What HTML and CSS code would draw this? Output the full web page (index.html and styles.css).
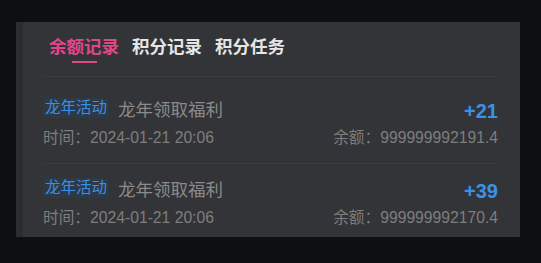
FILE: index.html
```html
<html>
<head>
<meta charset="UTF-8">
<title>余额记录</title>
<link rel="stylesheet" href="styles.css">
</head>
<body>
<div class="panel">
  <div class="tabs">
    <span class="tab active">余额记录</span>
    <span class="tab">积分记录</span>
    <span class="tab">积分任务</span>
  </div>
  <div class="list">
    <div class="row">
      <div class="left">
        <div class="line"><span class="badge">龙年活动</span><span class="title">龙年领取福利</span></div>
        <div class="meta">时间：2024-01-21 20:06</div>
      </div>
      <div class="right">
        <div class="amount">+21</div>
        <div class="meta">余额：999999992191.4</div>
      </div>
    </div>
    <div class="row">
      <div class="left">
        <div class="line"><span class="badge">龙年活动</span><span class="title">龙年领取福利</span></div>
        <div class="meta">时间：2024-01-21 20:06</div>
      </div>
      <div class="right">
        <div class="amount">+39</div>
        <div class="meta">余额：999999992170.4</div>
      </div>
    </div>
  </div>
</div>
</body>
</html>
```

FILE: styles.css
```css
body { margin: 0; background: #0e0f10; font-family: "Liberation Sans", "Noto Sans CJK SC", sans-serif; }

.panel { margin: 22px 0 0 16px; width: 497px; height: 215px; overflow: hidden;
         background: #323437; border-left: 7px solid #2a2c2e; }

.tabs { display: flex; gap: 13px; margin: 0 22px 0 20px; padding: 13px 0 13px 6px;
        border-bottom: 1px solid #3a3c3f; }
.tab { display: flex; flex-direction: column; align-items: center;
       font-size: 17.5px; font-weight: bold; line-height: 24px; color: #e6e6e6; }
.tab::after { content: ""; display: block; width: 25px; height: 2px; margin-top: 2px; }
.tab.active { color: #e0478a; }
.tab.active::after { background: #e0478a; }

.list { margin: 0 22px 0 20px; padding-top: 7px; }
.row { display: flex; justify-content: space-between; padding: 12px 0 13px;
       border-bottom: 1px solid #3a3c3f; }
.left, .right { display: flex; flex-direction: column; gap: 6px; }
.right { align-items: flex-end; }

.line { display: flex; align-items: center; height: 24px; }
.badge { font-size: 15.5px; line-height: 20px; padding: 0 2px; border-radius: 3px;
         background: #2c3946; color: #3b8fe4; }
.title { margin-left: 9px; font-size: 17.5px; color: #8b8b8b; }
.meta { font-size: 15.7px; line-height: 24px; color: #7e7e7e; }
.amount { font-size: 20px; font-weight: bold; line-height: 24px; margin-top: 3px; margin-bottom: -3px; color: #3a92e8; }
```
